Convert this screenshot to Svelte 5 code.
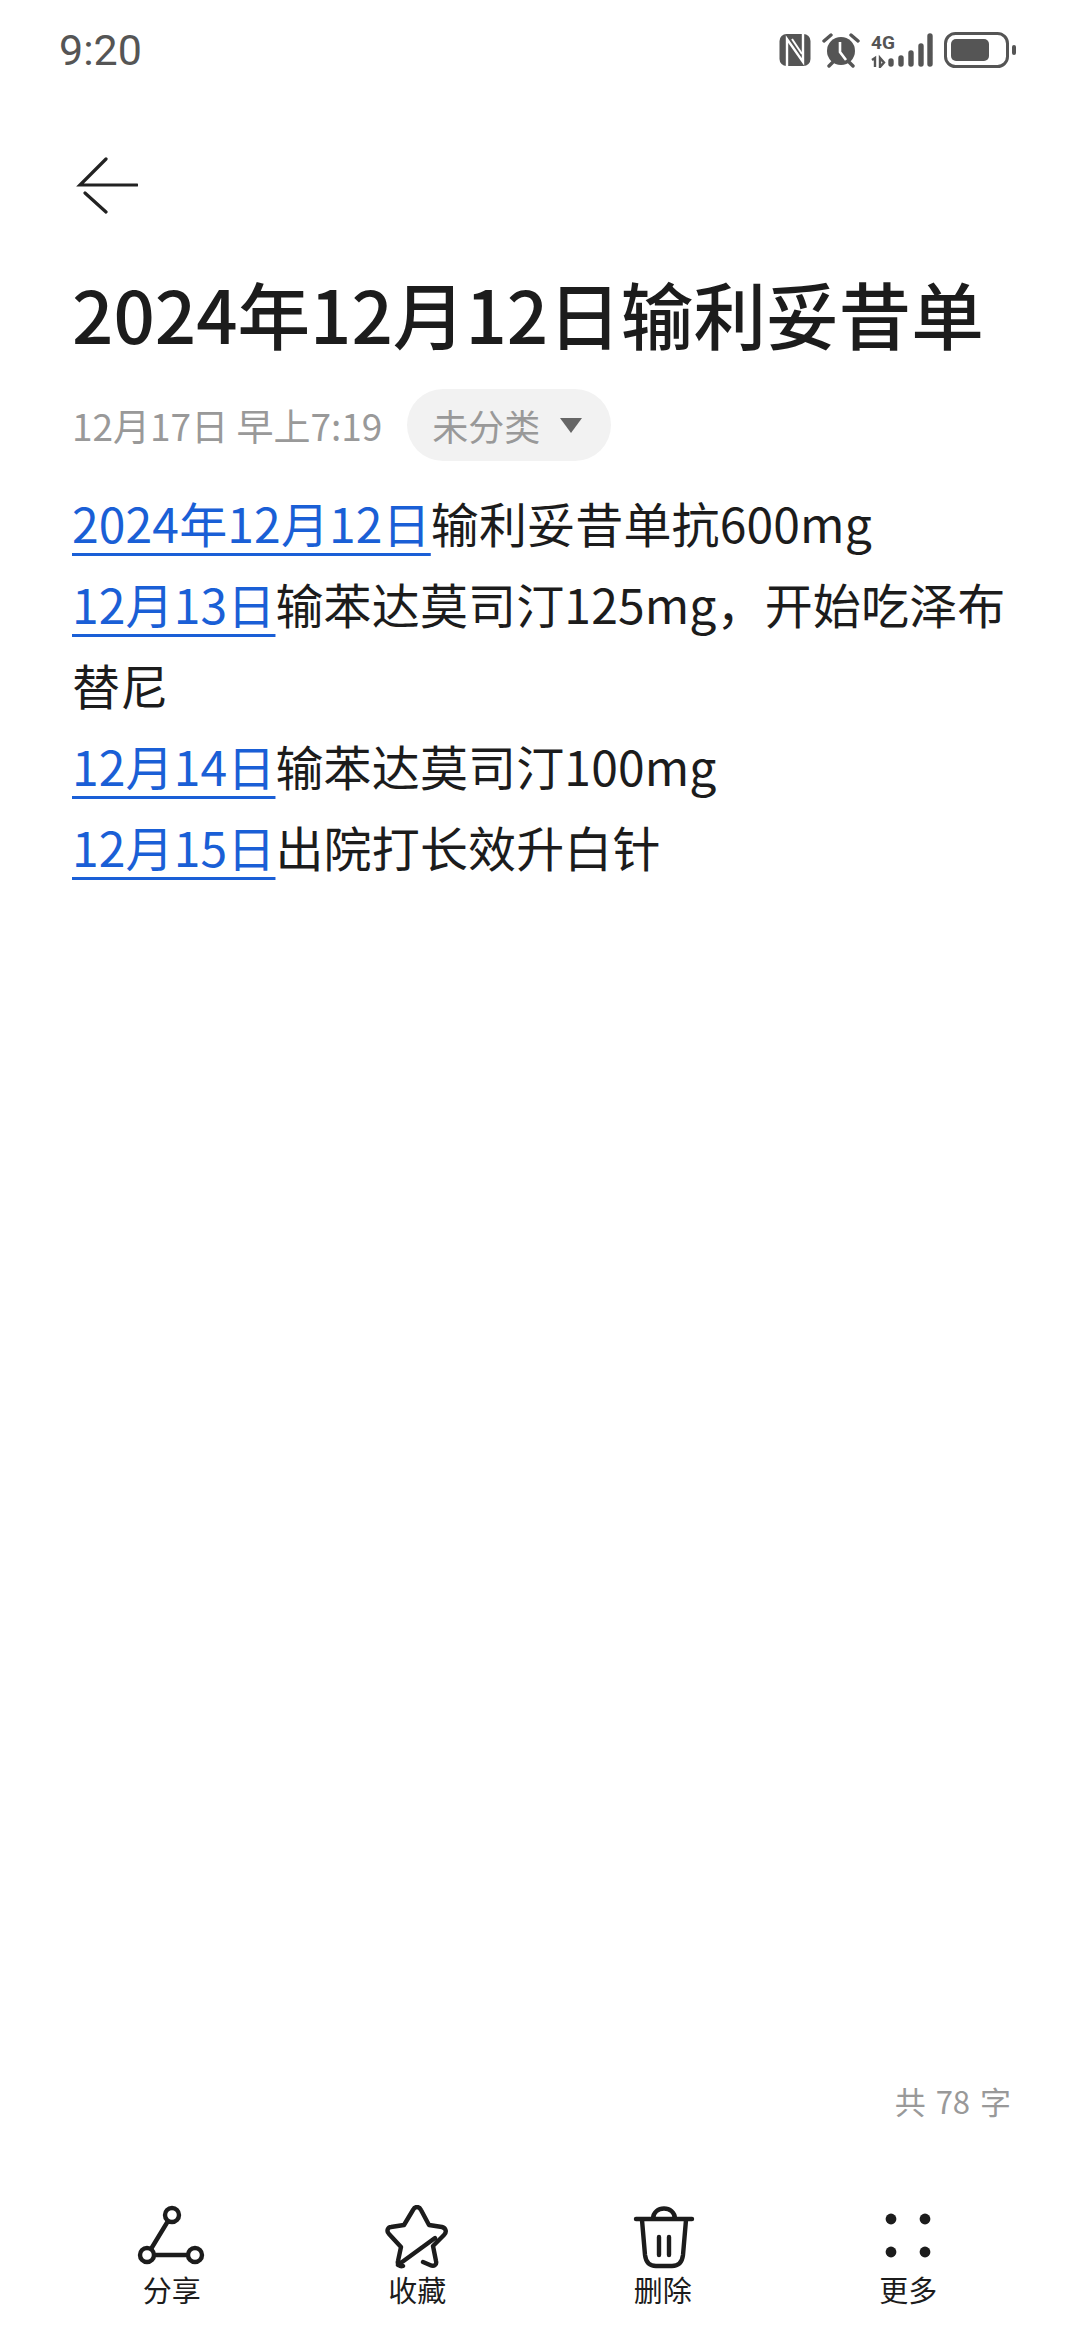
<script>
  const lines = [
    { date: '2024年12月12日', text: '输利妥昔单抗600mg' },
    { date: '12月13日', text: '输苯达莫司汀125mg，开始吃泽布替尼' },
    { date: '12月14日', text: '输苯达莫司汀100mg' },
    { date: '12月15日', text: '出院打长效升白针' }
  ]
</script>

<div class="page">
  <header class="status">
    <span class="time">9:20</span>
    <div class="status-icons">
      <svg width="32" height="34" viewBox="0 0 32 34">
        <rect x="0.5" y="1" width="31" height="32" rx="7" fill="#555" />
        <path d="M8 34V6l16 23V0" fill="none" stroke="#fff" stroke-width="2.4" />
        <path d="M14 15l10 15" fill="none" stroke="#fff" stroke-width="2" transform="translate(-1 -9)" />
      </svg>
      <svg width="38" height="36" viewBox="0 0 38 36">
        <circle cx="19" cy="19" r="14" fill="#555" />
        <path d="M18 10v10l6 8" fill="none" stroke="#fff" stroke-width="2.6" />
        <path d="M2 9l7-6M36 9l-7-6M7 34l4-4M31 34l-4-4" stroke="#555" stroke-width="3.4" stroke-linecap="round" />
      </svg>
      <svg width="62" height="36" viewBox="0 0 62 36">
        <text x="0" y="17" class="net">4G</text>
        <path d="M1 28l3-2v9M9 26v9l4-4.5z" fill="none" stroke="#555" stroke-width="2.4" />
        <g stroke="#555" stroke-width="5.4" stroke-linecap="round">
          <path d="M21 29v3M31 26v6M41 21v11M51 14v18M60 4v28" transform="translate(-1 0)" />
        </g>
      </svg>
      <svg width="72" height="36" viewBox="0 0 72 36">
        <rect x="1.5" y="1.5" width="62" height="33" rx="10" fill="none" stroke="#555" stroke-width="3" />
        <rect x="7" y="7" width="38" height="22" rx="5" fill="#555" />
        <rect x="68" y="13" width="4" height="10" rx="2" fill="#555" />
      </svg>
    </div>
  </header>

  <div class="back">
    <svg width="62" height="58" viewBox="0 0 62 58" fill="none" stroke="#222" stroke-width="3.2" stroke-linecap="round">
      <path d="M30 2L4 28h57M9 36l21 19" />
    </svg>
  </div>

  <h1>2024年12月12日输利妥昔单</h1>

  <div class="meta">
    <span class="date">12月17日 早上7:19</span>
    <span class="chip">未分类<i class="caret"></i></span>
  </div>

  <div class="body">
    {#each lines as line}
      <p><a href="#top">{line.date}</a>{line.text}</p>
    {/each}
  </div>

  <div class="count">共 78 字</div>

  <nav class="toolbar">
    <div class="tool">
      <svg class="share" width="70" height="64" viewBox="0 0 70 64" fill="none" stroke="#1c1c1c" stroke-width="4.4">
        <circle cx="37" cy="10" r="7" />
        <circle cx="12" cy="50" r="7" />
        <circle cx="60" cy="50" r="7" />
        <path d="M33 16L16 44M19 50h34" />
      </svg>
      <span>分享</span>
    </div>
    <div class="tool">
      <svg width="70" height="64" viewBox="0 0 70 64" fill="none" stroke="#1c1c1c" stroke-width="4.4" stroke-linecap="round" stroke-linejoin="round">
        <path d="M21 61c-3 1-6-1-5-5l3-14L7 29c-3-3-1-7 2-7l13-2 9-15c2-4 6-4 8 0l8 15 13 2c4 1 5 5 2 8L51 41l3 15c1 4-2 6-6 4l-7-3M16 60l37-27" />
      </svg>
      <span>收藏</span>
    </div>
    <div class="tool">
      <svg width="70" height="64" viewBox="0 0 70 64" fill="none" stroke="#1c1c1c" stroke-width="4.4" stroke-linecap="round">
        <path d="M8 14h56M25 14c0-14 22-14 22 0M14 15l3 35c1 8 5 11 11 11h16c6 0 10-3 11-11l3-35" />
        <path d="M31 32v18M41 32v18" />
      </svg>
      <span>删除</span>
    </div>
    <div class="tool">
      <svg width="70" height="64" viewBox="0 0 70 64" fill="#1c1c1c">
        <circle cx="18" cy="14" r="5.4" />
        <circle cx="52" cy="14" r="5.4" />
        <circle cx="18" cy="47" r="5.4" />
        <circle cx="52" cy="47" r="5.4" />
      </svg>
      <span>更多</span>
    </div>
  </nav>
</div>

<style>
  :global(body) {
    margin: 0;
    background: #fff;
  }

  .page {
    display: flex;
    flex-direction: column;
    height: 2340px;
    box-sizing: border-box;
    padding: 0 72px;
    overflow: hidden;
    font-family: "Noto Sans CJK SC", "Noto Sans", sans-serif;
    color: #1c1c1c;
  }

  .status {
    display: flex;
    align-items: center;
    justify-content: space-between;
    height: 100px;
    margin: 0 -8px 0 -13px;
  }

  .time {
    font-family: Roboto, sans-serif;
    font-size: 43px;
    color: #555;
  }

  .status-icons {
    display: flex;
    align-items: center;
    gap: 11px;
  }

  .net {
    font-family: Roboto, sans-serif;
    font-size: 19px;
    font-weight: 700;
    fill: #555;
  }

  .back {
    margin: 57px 0 0 4px;
    height: 58px;
  }

  h1 {
    margin: 48px 0 0;
    font-size: 72.6px;
    line-height: 100px;
    font-weight: 500;
    white-space: nowrap;
  }

  .meta {
    display: flex;
    align-items: center;
    gap: 25px;
    margin-top: 26px;
    font-size: 36px;
    color: #999;
  }

  .date {
    font-size: 37px;
  }

  .chip {
    display: flex;
    align-items: center;
    gap: 20px;
    height: 72px;
    padding: 0 29px 0 25px;
    border-radius: 36px;
    background: #f2f2f2;
  }

  .caret {
    width: 0;
    height: 0;
    border-left: 11px solid transparent;
    border-right: 11px solid transparent;
    border-top: 15px solid #666;
  }

  .body {
    margin-top: 21px;
    font-size: 48px;
    line-height: 81px;
    letter-spacing: 0.15px;
    width: 940px;
  }

  p {
    margin: 0;
  }

  a {
    color: #1a5fd6;
    text-decoration: underline;
    text-decoration-thickness: 3px;
    text-underline-offset: 10px;
  }

  .count {
    margin-top: auto;
    text-align: right;
    font-size: 31px;
    line-height: 40px;
    word-spacing: 3px;
    color: #999;
    margin-right: -3px;
  }

  .toolbar {
    display: grid;
    grid-template-columns: repeat(4, 1fr);
    margin: 84px -23px 31px;
  }

  .tool {
    display: flex;
    flex-direction: column;
    align-items: center;
    font-size: 29px;
    line-height: 40px;
  }

  .share {
    margin-left: -3px;
  }
</style>
